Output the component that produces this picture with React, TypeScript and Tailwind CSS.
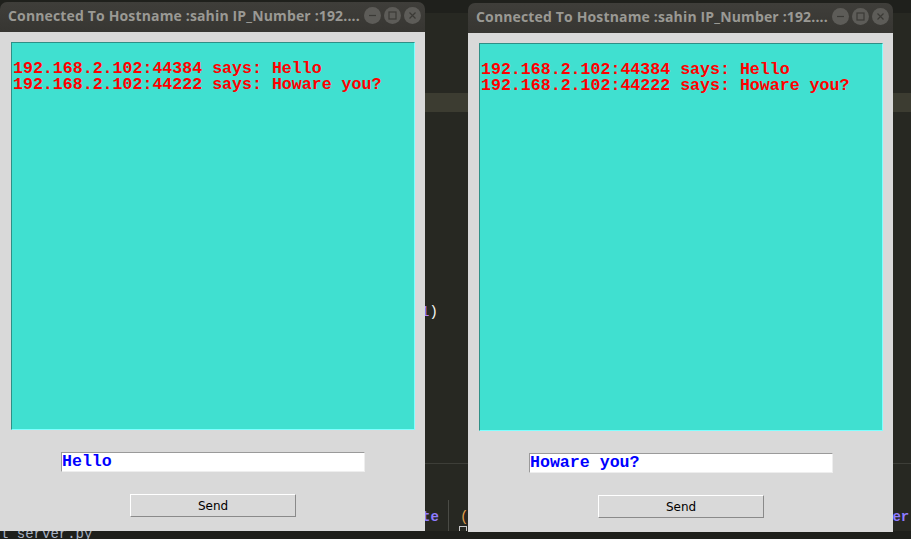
import React from 'react'

const mono = { fontFamily: '"Liberation Mono", "DejaVu Sans Mono", monospace' }

function TitleButtons() {
  return (
    <div className="flex items-center gap-[3px]">
      <div className="w-[17px] h-[17px] rounded-full bg-[#5d5c58] flex items-center justify-center">
        <svg width="9" height="9" viewBox="0 0 9 9">
          <path d="M1 4.5h7" stroke="#3b3a36" strokeWidth="1.2" />
        </svg>
      </div>
      <div className="w-[17px] h-[17px] rounded-full bg-[#5d5c58] flex items-center justify-center">
        <svg width="9" height="9" viewBox="0 0 9 9">
          <rect x="1" y="1" width="7" height="7" fill="none" stroke="#3b3a36" strokeWidth="1.2" />
        </svg>
      </div>
      <div className="w-[17px] h-[17px] rounded-full bg-[#5d5c58] flex items-center justify-center">
        <svg width="9" height="9" viewBox="0 0 9 9">
          <path d="M1.5 1.5l6 6M7.5 1.5l-6 6" stroke="#3b3a36" strokeWidth="1.2" />
        </svg>
      </div>
    </div>
  )
}

function ChatWindow({ draft }: { draft: string }) {
  const messages = ['192.168.2.102:44384 says: Hello', '192.168.2.102:44222 says: Howare you?']
  return (
    <div className="w-[425px] flex flex-col">
      {/* title bar */}
      <div className="h-[30px] rounded-t-[7px] bg-gradient-to-b from-[#3f3e3a] to-[#373632] flex items-center pl-[8px] pr-[4px] pb-[3px]">
        <span
          className="flex-1 text-[14px] tracking-[0.15px] font-bold text-[#9a9994] whitespace-nowrap overflow-hidden"
          style={{ fontFamily: '"Open Sans", "DejaVu Sans", sans-serif' }}
        >
          Connected To Hostname :sahin IP_Number :192....
        </span>
        <TitleButtons />
      </div>
      {/* body */}
      <div className="h-[499px] bg-[#d9d9d9] flex flex-col items-start">
        <div className="ml-[11px] mt-[10px] w-[404px] h-[388px] bg-[#40e0d0] border-t border-l border-[#2f8f86] border-r border-b border-r-[#80ffff] border-b-[#80ffff] pt-[18px] pl-[1px]">
          {messages.map((m) => (
            <div key={m} className="text-[16.6px] leading-[16px] font-bold text-[#ff0000] whitespace-pre" style={mono}>
              {m}
            </div>
          ))}
        </div>
        <div className="ml-[61px] mt-[22px] w-[304px] h-[20px] bg-white border-t border-l border-[#9a9a9a] border-r border-b border-r-[#eeeeee] border-b-[#eeeeee] flex items-center">
          <span className="text-[16.6px] leading-[16px] font-bold text-[#0000ff] whitespace-pre" style={mono}>
            {draft}
          </span>
        </div>
        <div
          className="ml-[130px] mt-[22px] w-[166px] h-[23px] bg-[#d9d9d9] border-t border-l border-white border-r border-b border-r-[#8a8a8a] border-b-[#8a8a8a] flex items-center justify-center text-[12px] text-black"
          style={{ fontFamily: '"DejaVu Sans", sans-serif' }}
        >
          Send
        </div>
      </div>
    </div>
  )
}

export default function App() {
  return (
    <div className="relative w-[911px] h-[539px] overflow-hidden bg-[#272822]">
      {/* editor behind the windows */}
      <div className="absolute left-0 top-0 w-full h-[13px] bg-[#1f201c]" />
      <div className="absolute left-0 top-[93px] w-full h-[19px] bg-[#3c3c31]" />
      <div className="absolute left-0 top-[463px] w-full h-px bg-[#3d3e38]" />
      <div className="absolute left-[448px] top-[500px] w-px h-[39px] bg-[#4a4b45]" />
      <span className="absolute left-[421px] top-[302px] text-[14px] whitespace-pre" style={mono}>
        <span className="text-[#ae81ff]">1</span>
        <span className="text-[#f8f8f2]">)</span>
      </span>
      <span className="absolute left-[422px] top-[507px] text-[14px] font-bold text-[#8f7cff] whitespace-pre" style={mono}>
        te
      </span>
      <span className="absolute left-[884px] top-[507px] text-[14px] font-bold text-[#8f7cff] whitespace-pre" style={mono}>
        ter
      </span>
      <span className="absolute left-[460px] top-[507px] text-[14px] text-[#e6a04b] whitespace-pre" style={mono}>
        (
      </span>
      <div className="absolute left-[459px] top-[526px] w-[8px] h-[14px] border border-[#c8c8c8]" />
      <div className="absolute left-0 top-[531px] w-full h-[8px] bg-[#1e1f1b]" />
      <span className="absolute left-0 top-[524px] text-[14px] text-[#a9b3c4] whitespace-pre" style={mono}>
        l server.py
      </span>

      {/* chat windows */}
      <div className="absolute left-0 top-[2px]">
        <ChatWindow draft="Hello" />
      </div>
      <div className="absolute left-[468px] top-[3px]">
        <ChatWindow draft="Howare you?" />
      </div>
    </div>
  )
}
